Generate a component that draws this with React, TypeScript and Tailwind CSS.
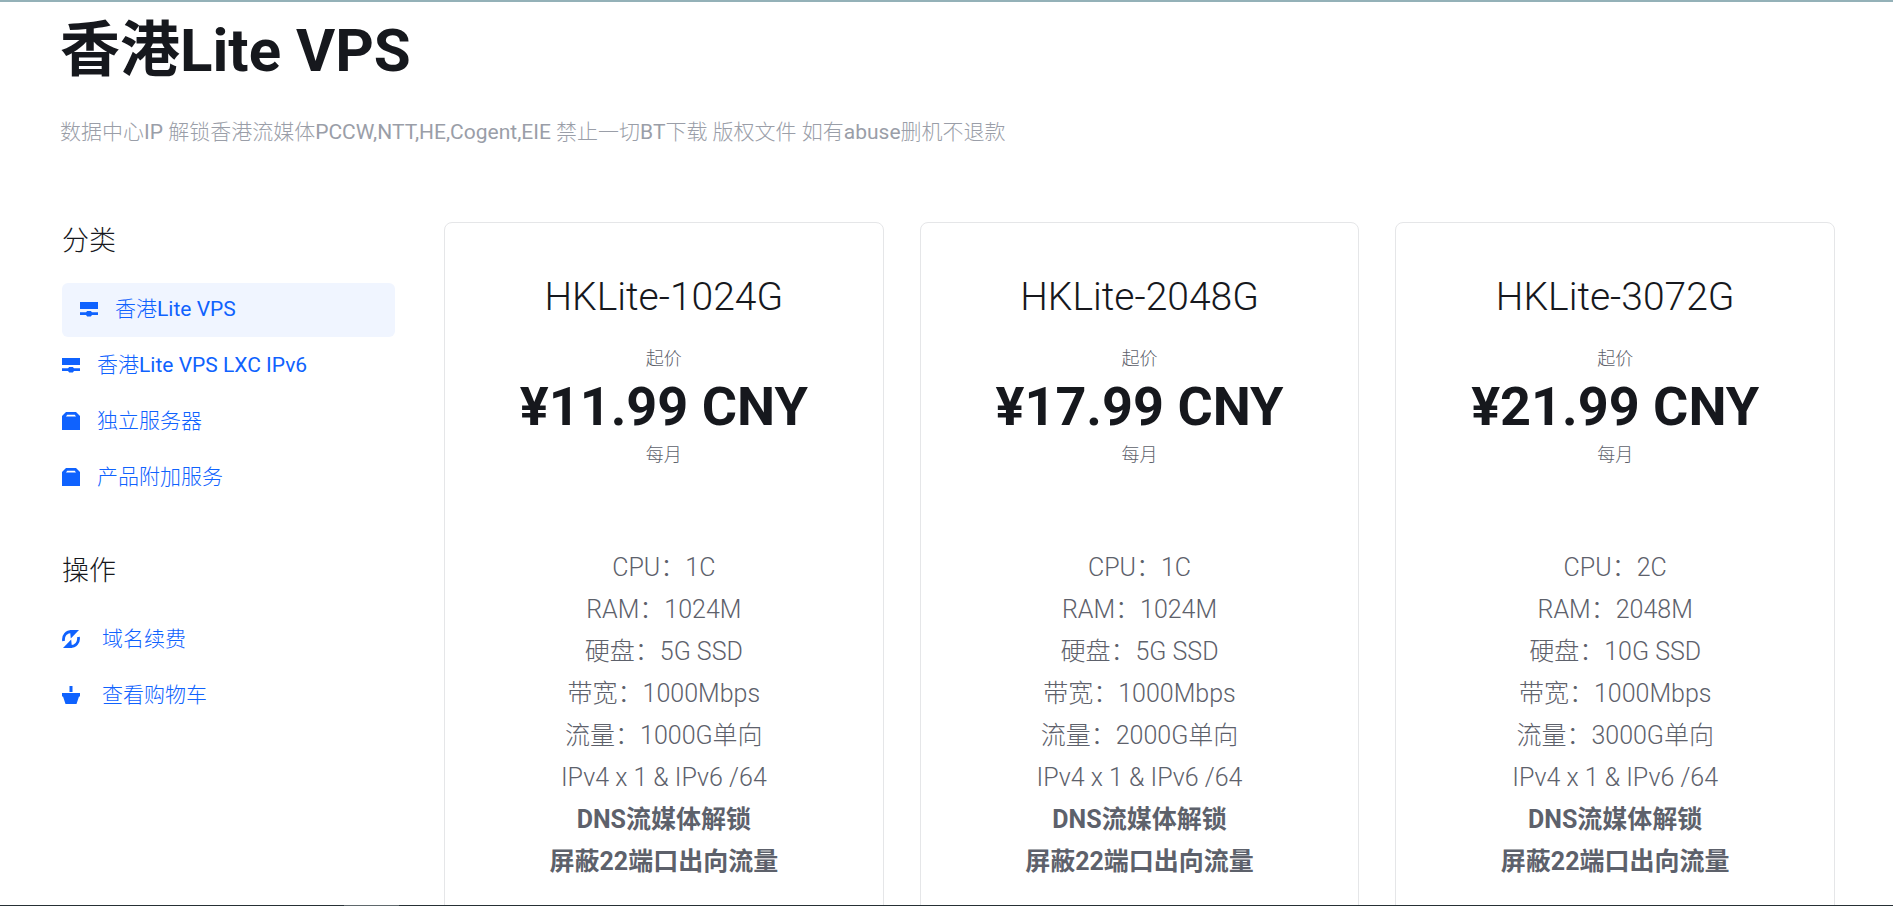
import React from 'react';

interface Plan {
  name: string;
  price: string;
  specs: string[];
}

const plans: Plan[] = [
  { name: 'HKLite-1024G', price: '¥11.99 CNY', specs: ['CPU：1C', 'RAM：1024M', '硬盘：5G SSD', '带宽：1000Mbps', '流量：1000G单向'] },
  { name: 'HKLite-2048G', price: '¥17.99 CNY', specs: ['CPU：1C', 'RAM：1024M', '硬盘：5G SSD', '带宽：1000Mbps', '流量：2000G单向'] },
  { name: 'HKLite-3072G', price: '¥21.99 CNY', specs: ['CPU：2C', 'RAM：2048M', '硬盘：10G SSD', '带宽：1000Mbps', '流量：3000G单向'] },
];

const iconClass = 'w-[18px] h-[18px] mb-0.5 shrink-0';

const ServerIcon = () => (
  <svg viewBox="0 0 18 18" className={iconClass} fill="currentColor" aria-hidden="true">
    <path d="M0 2h18v7H0zM0 12.200h6l1.200-1.200h3.600l1.200 1.200h6V15h-6l-1.200 1.500H7.200L6 15H0z" />
  </svg>
);

const BoxIcon = () => (
  <svg viewBox="0 0 18 18" className={iconClass} fill="currentColor" aria-hidden="true">
    <path fillRule="evenodd" d="M4 0h10l4 4v14H0V4zM5.2 2.800L4 4.6h10l-1.200-1.800z" />
  </svg>
);

const RenewIcon = () => (
  <svg viewBox="0 0 18 18" className={iconClass} fill="currentColor" aria-hidden="true">
    <path d="M1.600 11C.8 5.500 4.200 1.500 10 1.500" fill="none" stroke="currentColor" strokeWidth="2.800" />
    <path d="M8 .1h9L8.800 8.600z" />
    <path d="M16.400 7c.8 5.500-2.600 9.500-8.400 9.500" fill="none" stroke="currentColor" strokeWidth="2.800" />
    <path d="M10 17.900H1l8.200-8.500z" />
  </svg>
);

const BasketIcon = () => (
  <svg viewBox="0 0 18 18" className={iconClass} fill="currentColor" aria-hidden="true">
    <path d="M7.500 0h3v6h-3zM0 7h18v3.500h-1L14.500 18h-11L1 10.500H0z" />
  </svg>
);

const categories = [
  { label: '香港Lite VPS', icon: <ServerIcon />, active: true },
  { label: '香港Lite VPS LXC IPv6', icon: <ServerIcon />, active: false },
  { label: '独立服务器', icon: <BoxIcon />, active: false },
  { label: '产品附加服务', icon: <BoxIcon />, active: false },
];

const actions = [
  { label: '域名续费', icon: <RenewIcon /> },
  { label: '查看购物车', icon: <BasketIcon /> },
];

const Sidebar: React.FC = () => (
  <aside className="w-[333px] shrink-0 text-[21px] text-[#0f62fe] font-[Roboto,'Noto_Sans_CJK_SC_Light','Noto_Sans_CJK_SC',sans-serif]">
    <h2 className="text-[27px] leading-[38px] text-[#16181d]">分类</h2>
    <nav className="mt-[23px] flex flex-col gap-0.5">
      {categories.map(c => (
        <a
          key={c.label}
          href="#"
          className={c.active ? 'flex items-center gap-[17px] h-[54px] px-[18px] rounded-md bg-[#f0f5ff]' : 'flex items-center gap-[17px] h-[54px]'}
        >
          {c.icon}
          {c.label}
        </a>
      ))}
    </nav>
    <h2 className="mt-[47px] text-[27px] leading-[38px] text-[#16181d]">操作</h2>
    <nav className="mt-[23px] flex flex-col gap-0.5">
      {actions.map(a => (
        <a key={a.label} href="#" className="flex items-center gap-[22px] h-[54px]">
          {a.icon}
          {a.label}
        </a>
      ))}
    </nav>
  </aside>
);

const PlanCard: React.FC<{ plan: Plan }> = ({ plan }) => (
  <article className="flex-1 rounded-lg border border-[#e5e6e8] pt-12 pb-12 text-center text-[#5d616b]">
    <h3 className="text-[39px] leading-[52px] font-light text-[#16181d]">{plan.name}</h3>
    <div className="mt-[22px] text-[18px] leading-7 font-light">起价</div>
    <div className="text-[54px] leading-[68px] font-bold text-[#16181d]">{plan.price}</div>
    <div className="text-[18px] leading-7 font-light">每月</div>
    <ul className="mt-[78px] text-[25px] leading-[42px] font-light">
      {plan.specs.map(s => <li key={s}>{s}</li>)}
      <li>IPv4 x 1 &amp; IPv6 /64</li>
      <li className="font-bold">DNS流媒体解锁</li>
      <li className="font-bold">屏蔽22端口出向流量</li>
    </ul>
  </article>
);

const App: React.FC = () => (
  <div className="h-screen flex flex-col bg-white border-t-2 border-[#94b1b8] font-[Roboto,'Noto_Sans_CJK_SC',sans-serif]">
    <main className="flex-1 min-h-0 overflow-hidden pl-[62px] pr-[58px] pt-2.5">
      <header className="-ml-0.5">
        <h1 className="text-[60px] leading-[78px] font-bold text-[#16181d]">香港Lite VPS</h1>
        <p className="mt-[26px] text-[21px] leading-8 text-[#9a9ea8] font-[Roboto,'Noto_Sans_CJK_SC_Light','Noto_Sans_CJK_SC',sans-serif]">
          数据中心IP 解锁香港流媒体PCCW,NTT,HE,Cogent,EIE 禁止一切BT下载 版权文件 如有abuse删机不退款
        </p>
      </header>
      <div className="mt-[74px] flex gap-[49px]">
        <Sidebar />
        <section className="flex-1 flex gap-9">
          {plans.map(p => <PlanCard key={p.name} plan={p} />)}
        </section>
      </div>
    </main>
    <footer className="h-px shrink-0 flex bg-[#263035]">
      <div className="ml-[344px] w-[55px] bg-[#5f686c]" />
    </footer>
  </div>
);

export default App;
